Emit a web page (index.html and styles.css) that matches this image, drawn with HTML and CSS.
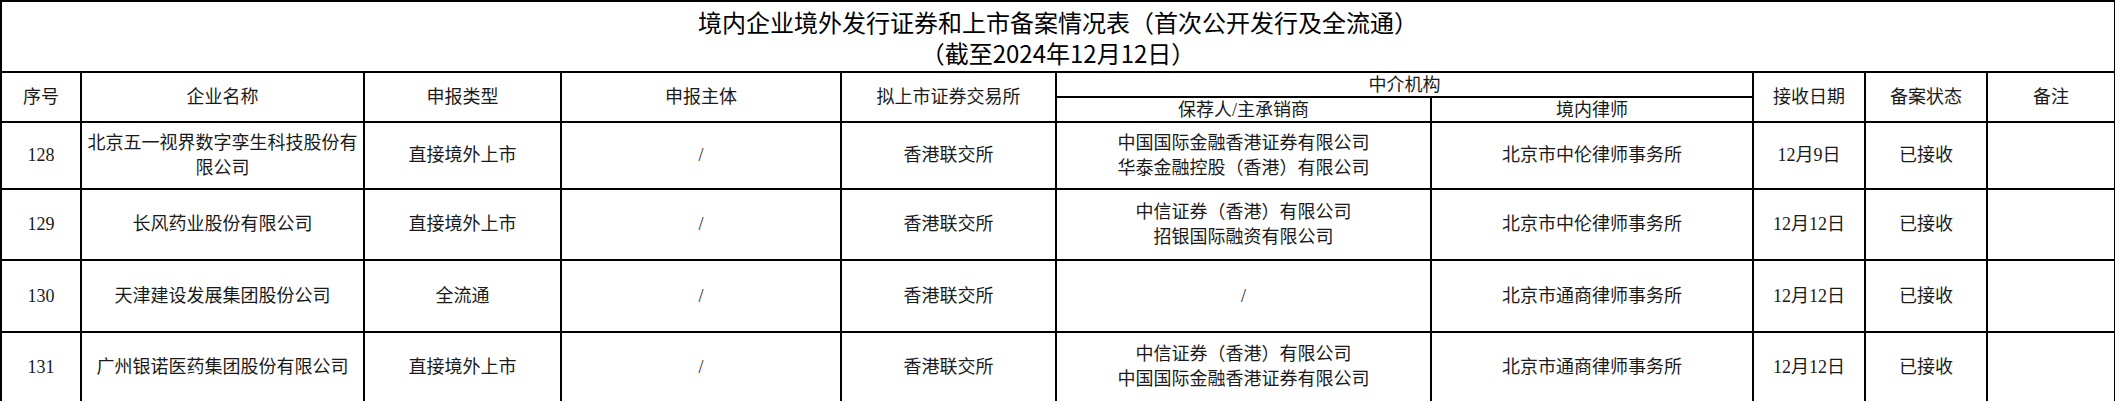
FILE: index.html
```html
<!DOCTYPE html>
<html lang="zh-CN">
<head>
<meta charset="utf-8">
<title>境内企业境外发行证券和上市备案情况表</title>
<link rel="stylesheet" href="styles.css">
</head>
<body>
<table class="sheet">
  <colgroup>
    <col class="c-no"><col class="c-name"><col class="c-type"><col class="c-subj"><col class="c-exch">
    <col class="c-spon"><col class="c-law"><col class="c-date"><col class="c-stat"><col class="c-note">
  </colgroup>
  <tr class="r-title">
    <td colspan="10" class="title">
      <div>境内企业境外发行证券和上市备案情况表（首次公开发行及全流通）</div>
      <div>（截至2024年12月12日）</div>
    </td>
  </tr>
  <tr class="r-head1">
    <td rowspan="2">序号</td>
    <td rowspan="2">企业名称</td>
    <td rowspan="2">申报类型</td>
    <td rowspan="2">申报主体</td>
    <td rowspan="2">拟上市证券交易所</td>
    <td colspan="2">中介机构</td>
    <td rowspan="2">接收日期</td>
    <td rowspan="2">备案状态</td>
    <td rowspan="2">备注</td>
  </tr>
  <tr class="r-head2">
    <td>保荐人/主承销商</td>
    <td>境内律师</td>
  </tr>
  <tr class="r-a">
    <td>128</td>
    <td>北京五一视界数字孪生科技股份有限公司</td>
    <td>直接境外上市</td>
    <td>/</td>
    <td>香港联交所</td>
    <td>中国国际金融香港证券有限公司<br>华泰金融控股（香港）有限公司</td>
    <td>北京市中伦律师事务所</td>
    <td>12月9日</td>
    <td>已接收</td>
    <td></td>
  </tr>
  <tr class="r-b">
    <td>129</td>
    <td>长风药业股份有限公司</td>
    <td>直接境外上市</td>
    <td>/</td>
    <td>香港联交所</td>
    <td>中信证券（香港）有限公司<br>招银国际融资有限公司</td>
    <td>北京市中伦律师事务所</td>
    <td>12月12日</td>
    <td>已接收</td>
    <td></td>
  </tr>
  <tr class="r-c">
    <td>130</td>
    <td>天津建设发展集团股份公司</td>
    <td>全流通</td>
    <td>/</td>
    <td>香港联交所</td>
    <td>/</td>
    <td>北京市通商律师事务所</td>
    <td>12月12日</td>
    <td>已接收</td>
    <td></td>
  </tr>
  <tr class="r-d">
    <td>131</td>
    <td>广州银诺医药集团股份有限公司</td>
    <td>直接境外上市</td>
    <td>/</td>
    <td>香港联交所</td>
    <td>中信证券（香港）有限公司<br>中国国际金融香港证券有限公司</td>
    <td>北京市通商律师事务所</td>
    <td>12月12日</td>
    <td>已接收</td>
    <td></td>
  </tr>
</table>
</body>
</html>
```

FILE: styles.css
```css
html, body {
  margin: 0;
  padding: 0;
  background: #fff;
}

.sheet {
  border-collapse: collapse;
  table-layout: fixed;
  width: 2114px;
  font-family: "Liberation Serif", "Noto Sans CJK SC", serif;
  font-size: 18px;
  line-height: 25px;
  color: #1a1a1a;
}

.sheet td {
  border: 2px solid #000;
  padding: 0 4px;
  text-align: center;
  vertical-align: middle;
  overflow: hidden;
}

.c-no { width: 80px; }
.c-name { width: 283px; }
.c-type { width: 197px; }
.c-subj { width: 280px; }
.c-exch { width: 215px; }
.c-spon { width: 375px; }
.c-law { width: 322px; }
.c-date { width: 112px; }
.c-stat { width: 122px; }
.c-note { width: 128px; }

.title {
  font-family: "Noto Sans CJK SC", sans-serif;
  font-size: 24px;
  line-height: 31px;
  color: #000;
  padding-bottom: 8px;
}

.r-title td { height: 69px; }
.r-head1 td, .r-head2 td { height: 23px; line-height: 22px; }
.r-a td { height: 65px; }
.r-b td { height: 69px; }
.r-c td { height: 70px; }
.r-d td { height: 68px; }
```
